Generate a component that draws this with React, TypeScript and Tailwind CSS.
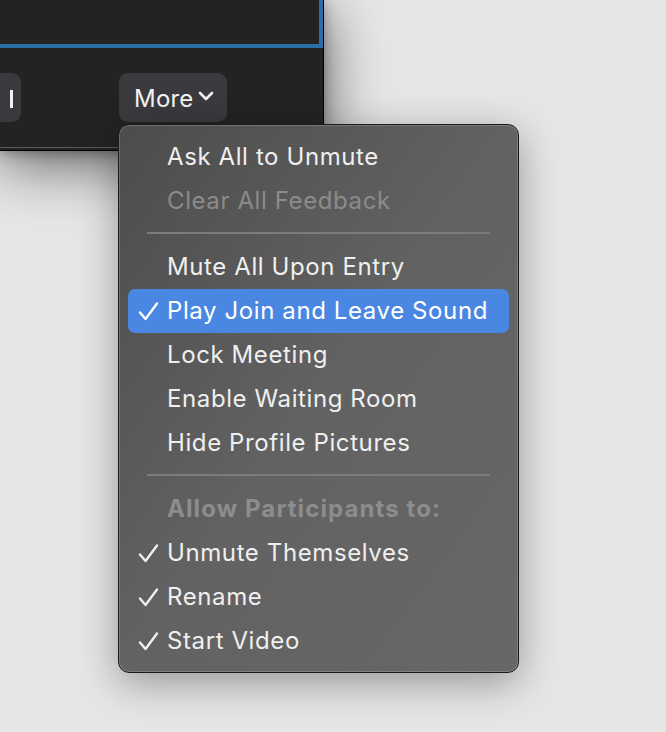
import React from "react";

function Check() {
  return (
    <svg width="22" height="20" viewBox="0 0 22 20" fill="none">
      <path
        d="M3 11.5 L8.5 18 L20 2.5"
        stroke="currentColor"
        strokeWidth="2.4"
        strokeLinecap="round"
        strokeLinejoin="round"
      />
    </svg>
  );
}

type Item =
  | { kind: "item"; label: string; checked?: boolean; disabled?: boolean; active?: boolean }
  | { kind: "sep" }
  | { kind: "header"; label: string };

const items: Item[] = [
  { kind: "item", label: "Ask All to Unmute" },
  { kind: "item", label: "Clear All Feedback", disabled: true },
  { kind: "sep" },
  { kind: "item", label: "Mute All Upon Entry" },
  { kind: "item", label: "Play Join and Leave Sound", checked: true, active: true },
  { kind: "item", label: "Lock Meeting" },
  { kind: "item", label: "Enable Waiting Room" },
  { kind: "item", label: "Hide Profile Pictures" },
  { kind: "sep" },
  { kind: "header", label: "Allow Participants to:" },
  { kind: "item", label: "Unmute Themselves", checked: true },
  { kind: "item", label: "Rename", checked: true },
  { kind: "item", label: "Start Video", checked: true },
];

export default function App() {
  return (
    <div
      className="relative w-[666px] h-[732px] overflow-hidden bg-[#e6e6e6]"
      style={{ fontFamily: "Inter, 'Noto Sans', sans-serif" }}
    >
      {/* meeting window */}
      <div className="w-[324px] h-[151px] bg-[#232323] border-r border-b border-black shadow-[0_12px_60px_rgba(0,0,0,0.6),0_2px_12px_rgba(0,0,0,0.3)]">
        <div className="h-[48px] border-r-[4px] border-b-[4px] border-[#2b6da6]" />
        <div className="flex items-center pt-[25px]">
          <div className="w-[21px] h-[49px] rounded-r-[9px] bg-[#3a3a3e] flex items-center justify-end pr-[8px]">
            <div className="w-[3px] h-[18px] bg-[#f2f2f2] mt-[2px]" />
          </div>
          <div className="ml-[98px] w-[108px] h-[49px] rounded-[9px] bg-[#3b3b3f] flex items-center pl-[15px] gap-[4px] pt-[3px]">
            <span className="text-[24px] text-[#f4f4f4] tracking-[0.2px]">More</span>
            <svg width="16" height="10" viewBox="0 0 16 10" fill="none" className="mb-[6px]">
              <path
                d="M2 2 L8 8 L14 2"
                stroke="#f4f4f4"
                strokeWidth="2.6"
                strokeLinecap="round"
                strokeLinejoin="round"
              />
            </svg>
          </div>
        </div>
        <div className="h-[1px] mt-[25px] bg-[#5a5a5a]" />
      </div>

      {/* dropdown menu */}
      <div className="absolute left-[118px] top-[124px] w-[401px] h-[549px] rounded-[11px] border border-[#1a1a1a] bg-gradient-to-br from-[#4c4c4c] via-[#626262] to-[#676767] shadow-[0_10px_40px_rgba(0,0,0,0.35),inset_0_0_0_1px_rgba(255,255,255,0.18)] pt-[10px] px-[9px]">
        {items.map((it, i) => {
          if (it.kind === "sep") {
            return (
              <div key={i} className="h-[22px] pt-[9px] px-[19px]">
                <div className="h-[2px] bg-[#7c7c7c]" />
              </div>
            );
          }
          if (it.kind === "header") {
            return (
              <div
                key={i}
                className="h-[44px] flex items-center pl-[39px] text-[24px] font-bold text-[#8d8d8d] tracking-[1.1px]"
              >
                {it.label}
              </div>
            );
          }
          return (
            <div
              key={i}
              className={`h-[44px] flex items-center rounded-[7px] ${
                it.active ? "bg-[#4a87e3] text-white" : it.disabled ? "text-[#8b8b8b]" : "text-[#efefef]"
              }`}
            >
              <div className="w-[39px] flex justify-end pr-[8px]">
                {it.checked && <Check />}
              </div>
              <span className="text-[24px] tracking-[0.6px]">{it.label}</span>
            </div>
          );
        })}
      </div>
    </div>
  );
}
